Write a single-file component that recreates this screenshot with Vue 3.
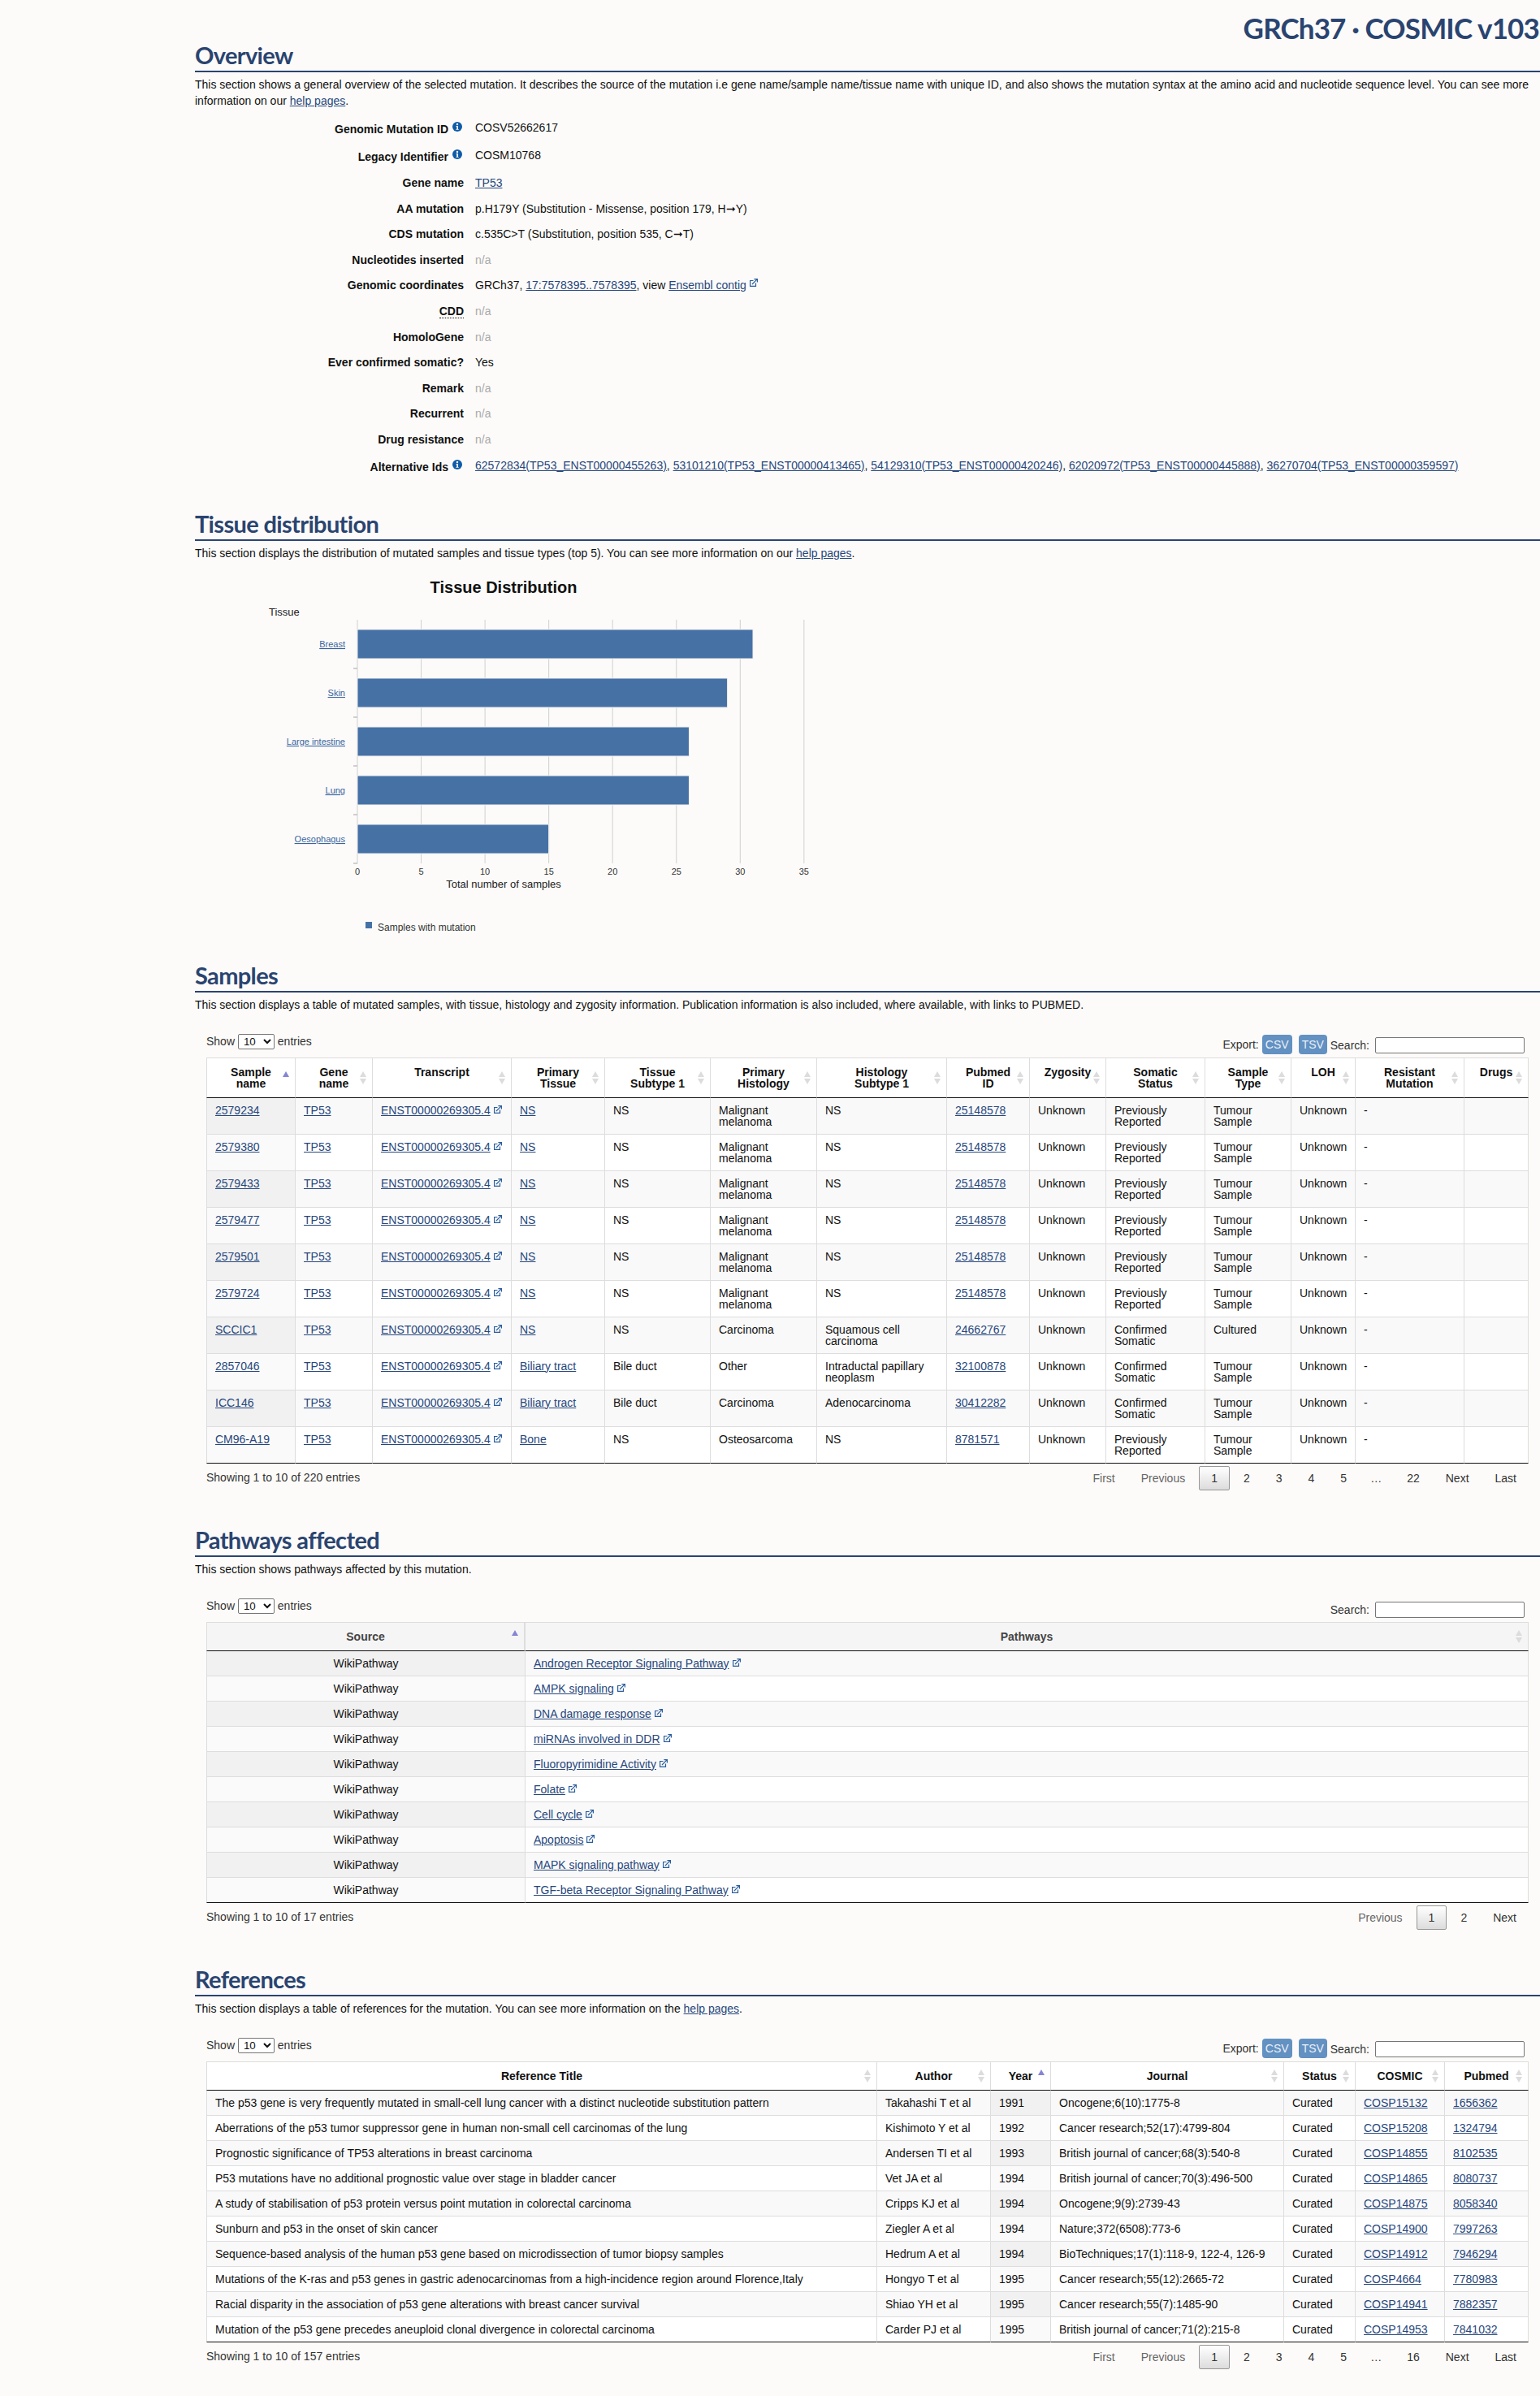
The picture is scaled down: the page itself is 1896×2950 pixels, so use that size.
<script setup>
const L = (text) => ({ text, link: true })
const X = (text) => ({ text, link: true, ext: true })
const norm = (rows) => rows.map((row) => row.map((c) => (typeof c === 'string' ? { text: c } : c)))

const infoRows = [
  { label: 'Genomic Mutation ID', info: true, tall: true, value: [{ text: 'COSV52662617' }] },
  { label: 'Legacy Identifier', info: true, tall: true, value: [{ text: 'COSM10768' }] },
  { label: 'Gene name', value: [L('TP53')] },
  { label: 'AA mutation', value: [{ text: 'p.H179Y (Substitution - Missense, position 179, H➞Y)' }] },
  { label: 'CDS mutation', value: [{ text: 'c.535C>T (Substitution, position 535, C➞T)' }] },
  { label: 'Nucleotides inserted', na: true },
  { label: 'Genomic coordinates', value: [{ text: 'GRCh37, ' }, L('17:7578395..7578395'), { text: ', view ' }, X('Ensembl contig')] },
  { label: 'CDD', dotted: true, na: true },
  { label: 'HomoloGene', na: true },
  { label: 'Ever confirmed somatic?', value: [{ text: 'Yes' }] },
  { label: 'Remark', na: true },
  { label: 'Recurrent', na: true },
  { label: 'Drug resistance', na: true },
  {
    label: 'Alternative Ids', info: true, tall: true,
    value: [
      L('62572834(TP53_ENST00000455263)'), { text: ', ' },
      L('53101210(TP53_ENST00000413465)'), { text: ', ' },
      L('54129310(TP53_ENST00000420246)'), { text: ', ' },
      L('62020972(TP53_ENST00000445888)'), { text: ', ' },
      L('36270704(TP53_ENST00000359597)')
    ]
  }
]

const ticks = [0, 5, 10, 15, 20, 25, 30, 35].map((v) => ({ v, x: 440 + v * 15.71 }))
const bars = [
  { name: 'Breast', n: 31 }, { name: 'Skin', n: 29 }, { name: 'Large intestine', n: 26 },
  { name: 'Lung', n: 26 }, { name: 'Oesophagus', n: 15 }
].map((b, i) => ({ ...b, y: 775 + i * 60, w: b.n * 15.71 }))

const ENST = X('ENST00000269305.4')
const PUB = L('25148578')
const PR = 'Previously Reported'
const CS = 'Confirmed Somatic'
const TS = 'Tumour Sample'
const mel = (id) => [L(id), L('TP53'), ENST, L('NS'), 'NS', 'Malignant melanoma', 'NS', PUB, 'Unknown', PR, TS, 'Unknown', '-', '']

const sampleRows = [
  mel('2579234'), mel('2579380'), mel('2579433'), mel('2579477'), mel('2579501'), mel('2579724'),
  [L('SCCIC1'), L('TP53'), ENST, L('NS'), 'NS', 'Carcinoma', 'Squamous cell carcinoma', L('24662767'), 'Unknown', CS, 'Cultured', 'Unknown', '-', ''],
  [L('2857046'), L('TP53'), ENST, L('Biliary tract'), 'Bile duct', 'Other', 'Intraductal papillary neoplasm', L('32100878'), 'Unknown', CS, TS, 'Unknown', '-', ''],
  [L('ICC146'), L('TP53'), ENST, L('Biliary tract'), 'Bile duct', 'Carcinoma', 'Adenocarcinoma', L('30412282'), 'Unknown', CS, TS, 'Unknown', '-', ''],
  [L('CM96-A19'), L('TP53'), ENST, L('Bone'), 'NS', 'Osteosarcoma', 'NS', L('8781571'), 'Unknown', PR, TS, 'Unknown', '-', '']
]

const pathwayRows = [
  'Androgen Receptor Signaling Pathway', 'AMPK signaling', 'DNA damage response', 'miRNAs involved in DDR',
  'Fluoropyrimidine Activity', 'Folate', 'Cell cycle', 'Apoptosis', 'MAPK signaling pathway', 'TGF-beta Receptor Signaling Pathway'
].map((p) => ['WikiPathway', X(p)])

const refRows = [
  ['The p53 gene is very frequently mutated in small-cell lung cancer with a distinct nucleotide substitution pattern', 'Takahashi T et al', '1991', 'Oncogene;6(10):1775-8', 'Curated', L('COSP15132'), L('1656362')],
  ['Aberrations of the p53 tumor suppressor gene in human non-small cell carcinomas of the lung', 'Kishimoto Y et al', '1992', 'Cancer research;52(17):4799-804', 'Curated', L('COSP15208'), L('1324794')],
  ['Prognostic significance of TP53 alterations in breast carcinoma', 'Andersen TI et al', '1993', 'British journal of cancer;68(3):540-8', 'Curated', L('COSP14855'), L('8102535')],
  ['P53 mutations have no additional prognostic value over stage in bladder cancer', 'Vet JA et al', '1994', 'British journal of cancer;70(3):496-500', 'Curated', L('COSP14865'), L('8080737')],
  ['A study of stabilisation of p53 protein versus point mutation in colorectal carcinoma', 'Cripps KJ et al', '1994', 'Oncogene;9(9):2739-43', 'Curated', L('COSP14875'), L('8058340')],
  ['Sunburn and p53 in the onset of skin cancer', 'Ziegler A et al', '1994', 'Nature;372(6508):773-6', 'Curated', L('COSP14900'), L('7997263')],
  ['Sequence-based analysis of the human p53 gene based on microdissection of tumor biopsy samples', 'Hedrum A et al', '1994', 'BioTechniques;17(1):118-9, 122-4, 126-9', 'Curated', L('COSP14912'), L('7946294')],
  ['Mutations of the K-ras and p53 genes in gastric adenocarcinomas from a high-incidence region around Florence,Italy', 'Hongyo T et al', '1995', 'Cancer research;55(12):2665-72', 'Curated', L('COSP4664'), L('7780983')],
  ['Racial disparity in the association of p53 gene alterations with breast cancer survival', 'Shiao YH et al', '1995', 'Cancer research;55(7):1485-90', 'Curated', L('COSP14941'), L('7882357')],
  ['Mutation of the p53 gene precedes aneuploid clonal divergence in colorectal carcinoma', 'Carder PJ et al', '1995', 'British journal of cancer;71(2):215-8', 'Curated', L('COSP14953'), L('7841032')]
]

const tableSections = [
  {
    title: 'Samples',
    before: 'This section displays a table of mutated samples, with tissue, histology and zygosity information. Publication information is also included, where available, with links to PUBMED.',
    export: true,
    widths: [110, 95, 171, 115, 130, 131, 160, 102, 94, 122, 106, 79, 134, 79],
    heads: ['Sample\nname', 'Gene\nname', 'Transcript', 'Primary\nTissue', 'Tissue\nSubtype 1', 'Primary\nHistology', 'Histology\nSubtype 1', 'Pubmed\nID', 'Zygosity', 'Somatic\nStatus', 'Sample\nType', 'LOH', 'Resistant\nMutation', 'Drugs'],
    sorted: 0, rows: norm(sampleRows), center: [],
    info: 'Showing 1 to 10 of 220 entries',
    pages: ['First', 'Previous', '1', '2', '3', '4', '5', '…', '22', 'Next', 'Last']
  },
  {
    title: 'Pathways affected',
    before: 'This section shows pathways affected by this mutation.',
    shaded: true,
    widths: [393, 1235],
    heads: ['Source', 'Pathways'],
    sorted: 0, rows: norm(pathwayRows), center: [0],
    info: 'Showing 1 to 10 of 17 entries',
    pages: ['Previous', '1', '2', 'Next']
  },
  {
    title: 'References',
    before: 'This section displays a table of references for the mutation. You can see more information on the ',
    help: true, after: '.',
    export: true,
    widths: [826, 140, 74, 287, 88, 110, 103],
    heads: ['Reference Title', 'Author', 'Year', 'Journal', 'Status', 'COSMIC', 'Pubmed'],
    sorted: 2, rows: norm(refRows), center: [],
    info: 'Showing 1 to 10 of 157 entries',
    pages: ['First', 'Previous', '1', '2', '3', '4', '5', '…', '16', 'Next', 'Last']
  }
]
</script>

<template>
  <div class="main">
    <h1 class="build">GRCh37 · COSMIC v103</h1>

    <section>
      <h2 class="heading">Overview</h2>
      <p class="intro">This section shows a general overview of the selected mutation. It describes the source of the mutation i.e gene name/sample name/tissue name with unique ID, and also shows the mutation syntax at the amino acid and nucleotide sequence level. You can see more information on our <a href="#">help pages</a>.</p>
      <div class="info-list">
        <div v-for="row in infoRows" :key="row.label" class="info-row" :class="{ tall: row.tall }">
          <div class="info-label">
            <span :class="{ dotted: row.dotted }">{{ row.label }}</span>
            <svg v-if="row.info" class="info-icon" width="12" height="12" viewBox="0 0 12 12">
              <circle cx="6" cy="6" r="6" fill="#0f5ba8" />
              <circle cx="6" cy="3" r="1.2" fill="#fff" />
              <path d="M4.600 5h2.300v3.900h.8v.9H4.400v-.9h.9V5.900h-.7z" fill="#fff" />
            </svg>
          </div>
          <div class="info-value">
            <span v-if="row.na" class="na">n/a</span>
            <template v-for="(part, i) in row.value" :key="i">
              <a v-if="part.link" href="#">{{ part.text }}</a><span v-else>{{ part.text }}</span>
              <svg v-if="part.ext" class="ext ext-high" width="10" height="10" viewBox="0 0 10 10" fill="none" stroke="#2a5d9c" stroke-width="1.2">
                <path d="M4.500 2.500H.6v6.900h6.900V5.500" />
                <path d="M3 7L8.800 1.200M5.400 .6h4v4" />
              </svg>
            </template>
          </div>
        </div>
      </div>
    </section>

    <section class="tissue">
      <h2 class="heading">Tissue distribution</h2>
      <p class="intro">This section displays the distribution of mutated samples and tissue types (top 5). You can see more information on our <a href="#">help pages</a>.</p>
      <svg class="chart" width="800" height="492" viewBox="240 691 800 492" font-family="'Liberation Sans', Arial, sans-serif">
        <text x="620" y="730" text-anchor="middle" font-size="20" font-weight="700" fill="#111">Tissue Distribution</text>
        <text x="331" y="758" font-size="13" fill="#222">Tissue</text>
        <line v-for="t in ticks" :key="t.v" :x1="t.x" :x2="t.x" y1="763" y2="1063" stroke="#d0d0d0" />
        <g v-for="(b, i) in bars" :key="b.name">
          <rect x="440" :y="b.y" :width="b.w" height="36" fill="#4671a5" stroke="#f0f0f0" stroke-width="1" />
          <line x1="435" x2="440" :y1="823 + i * 60" :y2="823 + i * 60" stroke="#c0c0c0" stroke-width="1.5" />
          <text x="425" :y="b.y + 22" text-anchor="end" font-size="11" fill="#3a66a0" text-decoration="underline">{{ b.name }}</text>
        </g>
        <text v-for="t in ticks" :key="'l' + t.v" :x="t.x" y="1077" text-anchor="middle" font-size="11" fill="#333">{{ t.v }}</text>
        <text x="620" y="1093" text-anchor="middle" font-size="13" fill="#222">Total number of samples</text>
        <rect x="450" y="1135" width="8" height="8" fill="#4671a5" />
        <text x="465" y="1146" font-size="12" fill="#333">Samples with mutation</text>
      </svg>
    </section>

    <section v-for="sec in tableSections" :key="sec.title" class="table-section">
      <h2 class="heading">{{ sec.title }}</h2>
      <p class="intro">{{ sec.before }}<a v-if="sec.help" href="#">help pages</a>{{ sec.after }}</p>
      <div class="table-wrap">
        <div class="toolbar">
          <label class="length">Show <select><option>10</option></select> entries</label>
          <div class="tools">
            <template v-if="sec.export">
              <span>Export:</span>
              <button class="export">CSV</button>
              <button class="export">TSV</button>
            </template>
            <label class="search">Search:<input type="search" /></label>
          </div>
        </div>
        <table :class="{ shaded: sec.shaded }">
          <colgroup>
            <col v-for="(w, i) in sec.widths" :key="i" :style="{ width: w + 'px' }" />
          </colgroup>
          <thead>
            <tr>
              <th v-for="(h, i) in sec.heads" :key="h" :class="i === sec.sorted ? 'sort-asc' : 'sort'">{{ h }}</th>
            </tr>
          </thead>
          <tbody>
            <tr v-for="(row, r) in sec.rows" :key="r" :class="r % 2 ? 'even' : 'odd'">
              <td v-for="(cell, c) in row" :key="c" :class="{ sorted: c === sec.sorted, center: sec.center.includes(c) }">
                <a v-if="cell.link" href="#">{{ cell.text }}</a><span v-else>{{ cell.text }}</span>
                <svg v-if="cell.ext" class="ext" width="10" height="10" viewBox="0 0 10 10" fill="none" stroke="#2a5d9c" stroke-width="1.2">
                  <path d="M4.500 2.500H.6v6.900h6.900V5.500" />
                  <path d="M3 7L8.800 1.200M5.400 .6h4v4" />
                </svg>
              </td>
            </tr>
          </tbody>
        </table>
        <div class="table-foot">
          <div class="showing">{{ sec.info }}</div>
          <div class="pager">
            <span
              v-for="p in sec.pages"
              :key="p"
              :class="{
                dots: p === '…',
                page: p !== '…',
                current: p === '1',
                disabled: p === 'First' || p === 'Previous'
              }"
            >{{ p }}</span>
          </div>
        </div>
      </div>
    </section>
  </div>
</template>

<style>
html, body {
  background: #fcfbf9;
}
</style>

<style scoped>
.main {
  margin-left: 240px;
  min-height: 2950px;
  font-family: "Liberation Sans", Arial, sans-serif;
  font-size: 14px;
  color: #111;
}
a {
  color: #27477c;
  text-decoration: underline;
}
.build {
  margin: 0;
  padding: 19px 1px 0 0;
  font-family: Lato, sans-serif;
  font-size: 35px;
  font-weight: 700;
  line-height: 31px;
  letter-spacing: -0.85px;
  color: #2a4470;
  text-align: right;
}
.heading {
  margin: 0;
  padding-bottom: 1px;
  font-family: Lato, sans-serif;
  font-size: 29px;
  font-weight: 700;
  line-height: 36px;
  letter-spacing: -0.65px;
  color: #2a4470;
  border-bottom: 2px solid #2a4470;
}
.intro {
  margin: 5px 0 0;
  line-height: 20px;
}
.info-list {
  margin-top: 13px;
}
.info-row {
  display: grid;
  grid-template-columns: 331px 1fr;
  column-gap: 14px;
  height: 31.6px;
  line-height: 20px;
}
.info-row.tall {
  height: 34px;
}
.info-label {
  font-weight: 700;
  text-align: right;
}
.tall .info-label {
  padding-top: 2px;
}
.dotted {
  border-bottom: 1px dotted #111;
}
.info-icon {
  margin: 0 2px 0 5px;
  vertical-align: 2px;
}
.na {
  color: #aaa;
}
.ext {
  margin-left: 4px;
  vertical-align: 1px;
}
.ext-high {
  vertical-align: 3px;
}
.tissue {
  margin-top: 30px;
}
.chart {
  display: block;
}
.table-section + .table-section {
  margin-top: 42.5px;
}
.table-wrap {
  padding: 0 14px;
}
.toolbar {
  display: flex;
  justify-content: space-between;
  align-items: flex-start;
  height: 29px;
  margin-top: 26px;
  color: #333;
}
.length {
  line-height: 19px;
}
.length select {
  width: 45px;
  height: 19px;
  padding: 0 0 0 2px;
  font-family: "Liberation Sans", Arial, sans-serif;
  font-size: 13.33px;
  background: #fff;
  color: #111;
  border: 1px solid #767676;
  border-radius: 2px;
}
.tools {
  display: flex;
  align-items: center;
  justify-content: flex-end;
  gap: 4px;
  height: 24px;
  margin-top: 1px;
  padding-right: 5px;
}
.export {
  width: 37px;
  height: 24px;
  margin: 0;
  padding: 0;
  font-family: "Liberation Sans", Arial, sans-serif;
  font-size: 14px;
  color: #eaf0f7;
  background: #6391c2;
  border: 0;
  border-radius: 4px;
}
.export + .export {
  margin-left: 4px;
  width: 35px;
}
.search {
  display: flex;
  align-items: center;
  gap: 7px;
  margin-top: 2px;
}
.search input {
  box-sizing: border-box;
  width: 184px;
  height: 20px;
  margin: 0;
  padding: 0;
  background: #fff;
  border: 1px solid #767676;
  border-radius: 2px;
  appearance: none;
}
table {
  width: 1628px;
  table-layout: fixed;
  border-collapse: separate;
  border-spacing: 0;
  line-height: 14px;
  background: #fff;
}
th, td {
  border-right: 1px solid #ddd;
}
th:first-child, td:first-child {
  border-left: 1px solid #ddd;
}
th {
  position: relative;
  padding: 10px;
  font-weight: 700;
  text-align: center;
  vertical-align: top;
  white-space: pre-line;
  border-top: 1px solid #ddd;
  border-bottom: 1px solid #111;
}
td {
  padding: 8px 10px;
  vertical-align: top;
  border-bottom: 1px solid #ddd;
}
tbody tr:last-child td {
  border-bottom-color: #111;
}
.odd td {
  background: #f9f9f9;
}
.even td {
  background: #fff;
}
.odd td.sorted {
  background: #f1f1f1;
}
.even td.sorted {
  background: #fafafa;
}
td.center {
  text-align: center;
}
.shaded th {
  color: #444;
  background: #f5f5f5;
}
.shaded th:first-child {
  border-right-width: 2px;
}
.sort::before,
.sort::after,
.sort-asc::before {
  content: "";
  position: absolute;
  right: 7px;
  border-left: 4px solid transparent;
  border-right: 4px solid transparent;
}
.sort::before,
.sort-asc::before {
  top: calc(50% - 8px);
  border-bottom: 7px solid #dcdcdc;
}
.sort::after {
  top: calc(50% + 1px);
  border-top: 7px solid #dcdcdc;
}
.sort-asc::before {
  border-bottom-color: #8585d6;
}
.table-foot {
  display: flex;
  justify-content: space-between;
  color: #333;
}
.showing {
  padding-top: 10px;
  line-height: 14px;
}
.pager {
  display: flex;
  justify-content: flex-end;
  padding-top: 3.5px;
}
.page {
  box-sizing: border-box;
  height: 30px;
  margin-left: 2px;
  padding: 7px 14px;
  line-height: 14px;
  text-align: center;
  border: 1px solid transparent;
  border-radius: 2px;
}
.dots {
  padding: 0 14px;
  line-height: 30px;
}
.disabled {
  color: #666;
}
.current {
  background: linear-gradient(#fff, #dcdcdc);
  border-color: #979797;
}
</style>
